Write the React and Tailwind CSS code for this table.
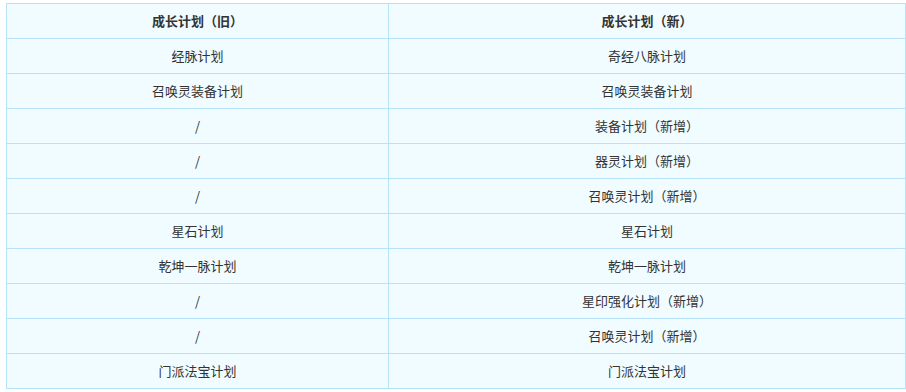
export default function App() {
  const rows = [
    ["经脉计划", "奇经八脉计划"],
    ["召唤灵装备计划", "召唤灵装备计划"],
    ["/", "装备计划（新增）"],
    ["/", "器灵计划（新增）"],
    ["/", "召唤灵计划（新增）"],
    ["星石计划", "星石计划"],
    ["乾坤一脉计划", "乾坤一脉计划"],
    ["/", "星印强化计划（新增）"],
    ["/", "召唤灵计划（新增）"],
    ["门派法宝计划", "门派法宝计划"],
  ];
  return (
    <div className="w-[906px] h-[392px] bg-white pt-[3px] pl-[6px]" style={{ fontFamily: '"Noto Sans CJK SC", "Microsoft YaHei", sans-serif' }}>
      <table className="table-fixed border-collapse w-[900px] bg-[#f0fcff] text-[13px] text-[#333333]">
        <colgroup>
          <col className="w-[382px]" />
          <col />
        </colgroup>
        <thead>
          <tr className="h-[35px]">
            <th className="border border-[#b6e3fa] font-bold text-center p-0">成长计划（旧）</th>
            <th className="border border-[#b6e3fa] font-bold text-center p-0">成长计划（新）</th>
          </tr>
        </thead>
        <tbody>
          {rows.map((r, i) => (
            <tr key={i} className="h-[35px]">
              <td className="border border-[#b6e3fa] text-center p-0">{r[0]}</td>
              <td className="border border-[#b6e3fa] text-center p-0">{r[1]}</td>
            </tr>
          ))}
        </tbody>
      </table>
    </div>
  );
}
